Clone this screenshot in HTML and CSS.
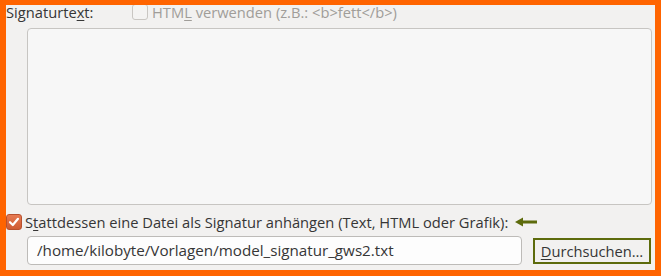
FILE: index.html
```html
<!DOCTYPE html>
<html lang="de">
<head>
  <meta charset="UTF-8" />
  <title>Signatur</title>
  <link rel="stylesheet" href="styles.css">
</head>
<body>
  <div class="frame">
    <div class="row head">
      <span class="label">Signaturte<u>x</u>t:</span>
      <span class="check disabled"><span class="box"></span><span>HTM<u>L</u> verwenden (z.B.: &lt;b&gt;fett&lt;/b&gt;)</span></span>
    </div>
    <div class="textarea"></div>
    <div class="row file-check">
      <span class="box checked">
        <svg width="12" height="12" viewBox="0 0 12 12"><path d="M2 6.2 L4.8 9 L10 2.8" fill="none" stroke="#fff" stroke-width="2.2" stroke-linecap="round" stroke-linejoin="round"/></svg>
      </span>
      <span>S<u>t</u>attdessen eine Datei als Signatur anhängen (Text, HTML oder Grafik):</span>
      <svg class="arrow" width="24" height="10" viewBox="0 0 24 10"><path d="M1 5 L9 0.5 L9 3.5 L23 3.5 L23 6.5 L9 6.5 L9 9.5 Z" fill="#5d6b0c"/></svg>
    </div>
    <div class="row file-row">
      <div class="input">/home/kilobyte/Vorlagen/model_signatur_gws2.txt</div>
      <button class="btn"><u>D</u>urchsuchen…</button>
    </div>
  </div>
</body>
</html>
```

FILE: styles.css
```css
* {
  margin: 0;
  padding: 0;
  box-sizing: border-box;
}
body {
  font-family: "Open Sans", "DejaVu Sans", sans-serif;
  font-size: 14.7px;
  color: #363636;
  background: #ff6400;
}
.frame {
  width: 661px;
  height: 276px;
  border: solid #ff6400;
  border-width: 5px 6px 6px 6px;
  background: #f2f1f0;
  overflow: hidden;
}
u {
  text-decoration-thickness: 1px;
  text-underline-offset: 2px;
}
.row {
  display: flex;
  align-items: center;
}
.head {
  height: 20px;
  margin-top: -3px;
}
.label {
  width: 126px;
}
.check {
  display: flex;
  align-items: center;
}
.disabled {
  color: #a09d99;
}
.box {
  display: inline-flex;
  align-items: center;
  justify-content: center;
  width: 16px;
  height: 16px;
  border: 1px solid #c9c6c2;
  border-radius: 3px;
  background: #f4f3f2;
  margin-right: 4px;
}
.box.checked {
  background: linear-gradient(#e77a52, #cf5c34);
  border-color: #b8512e;
}
.textarea {
  margin: 6px 3px 0 21px;
  height: 177px;
  background: #f7f7f7;
  border: 1px solid #c7c5c2;
  border-radius: 4px;
}
.file-check {
  height: 28px;
  margin-top: 1px;
  padding-top: 3px;
}
.file-check .box {
  margin-right: 3px;
}
.arrow {
  margin-left: 6px;
}
.file-row {
  margin: 2px 0 0 21px;
  align-items: flex-start;
}
.input {
  width: 495px;
  height: 29px;
  line-height: 27px;
  padding-left: 9px;
  background: #fdfdfd;
  border: 1px solid #bdbbb8;
  border-radius: 4px;
  font-size: 15.2px;
}
.btn {
  margin: 2px 0 0 11px;
  width: 118px;
  height: 26px;
  font: inherit;
  color: #363636;
  background: #f2f1f0;
  border: 2px solid #5d6b0c;
}
```
